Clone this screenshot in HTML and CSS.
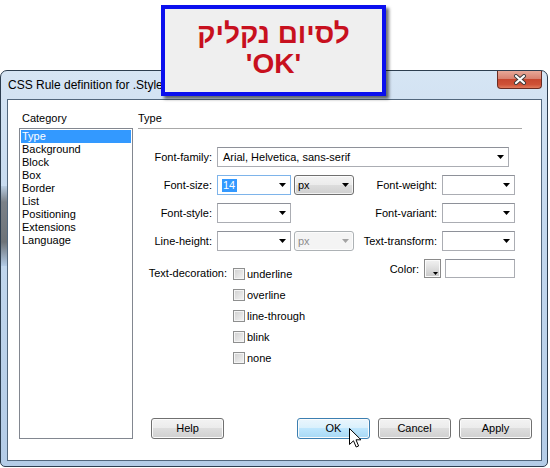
FILE: index.html
```html
<!DOCTYPE html>
<html>
	<head>
		<meta charset="utf-8">
		<title>CSS Rule definition</title>
		<link rel="stylesheet" href="styles.css">
	</head>
	<body>
		<div class="callout">
			<div class="callout-text">
				<div dir="rtl">לסיום נקליק</div>
				<div dir="ltr">'OK'</div>
			</div>
		</div>

		<div class="window">
			<div class="titlebar">
				<span class="title">CSS Rule definition for .Style</span>
				<div class="close">
					<svg width="14" height="11" viewBox="0 0 14 11">
						<path d="M3 2 L11 9 M11 2 L3 9" stroke="#3b3b3b" stroke-width="4" stroke-linecap="round"/>
						<path d="M3 2 L11 9 M11 2 L3 9" stroke="#ffffff" stroke-width="2.2" stroke-linecap="round"/>
					</svg>
				</div>
			</div>

			<div class="client">
				<div class="categories">
					<div class="heading">Category</div>
					<ul class="listbox">
						<li class="selected">Type</li>
						<li>Background</li>
						<li>Block</li>
						<li>Box</li>
						<li>Border</li>
						<li>List</li>
						<li>Positioning</li>
						<li>Extensions</li>
						<li>Language</li>
					</ul>
				</div>

				<div class="panel">
					<div class="panel-title">Type</div>

					<div class="form">
						<!-- row 1 -->
						<span class="lbl">Font-family:</span>
						<div class="combo wide"><span>Arial, Helvetica, sans-serif</span><i class="arrow"></i></div>

						<!-- row 2 -->
						<span class="lbl">Font-size:</span>
						<div class="combo focused"><span class="sel">14</span><i class="arrow"></i></div>
						<div class="dropdown"><span>px</span><i class="arrow"></i></div>
						<span class="lbl lbl2">Font-weight:</span>
						<div class="combo"><span></span><i class="arrow"></i></div>

						<!-- row 3 -->
						<span class="lbl">Font-style:</span>
						<div class="combo"><span></span><i class="arrow"></i></div>
						<span class="lbl lbl2">Font-variant:</span>
						<div class="combo"><span></span><i class="arrow"></i></div>

						<!-- row 4 -->
						<span class="lbl">Line-height:</span>
						<div class="combo"><span></span><i class="arrow"></i></div>
						<div class="dropdown disabled"><span>px</span><i class="arrow"></i></div>
						<span class="lbl lbl2">Text-transform:</span>
						<div class="combo"><span></span><i class="arrow"></i></div>

						<!-- row 5 -->
						<div class="decoration">
							<span class="deco-label">Text-decoration:</span>
							<div class="checks">
								<div class="check"><i class="box"></i>underline</div>
								<div class="check"><i class="box"></i>overline</div>
								<div class="check"><i class="box"></i>line-through</div>
								<div class="check"><i class="box"></i>blink</div>
								<div class="check"><i class="box"></i>none</div>
							</div>
						</div>
						<div class="color-field">
							<span>Color:</span>
							<i class="swatch"></i>
							<div class="textbox"></div>
						</div>
					</div>

					<div class="buttons">
						<div class="btn help">Help</div>
						<div class="btn default">OK</div>
						<div class="btn">Cancel</div>
						<div class="btn">Apply</div>
					</div>
				</div>
			</div>
		</div>

		<svg class="cursor" width="14" height="21" viewBox="0 0 14 21">
			<path d="M0.5 0.5 V16.5 L4.5 12.8 L7.2 19 L9.6 18 L7 11.8 H12 Z" fill="#ffffff" stroke="#000000" stroke-width="1" stroke-linejoin="miter"/>
		</svg>
	</body>
</html>
```

FILE: styles.css
```css
* {
	box-sizing: border-box;
}

body {
	margin: 0;
	background: #ffffff;
	font-family: "Liberation Sans", Arial, sans-serif;
	font-size: 11px;
	color: #000000;
}

/* callout over the dialog */

.callout {
	position: absolute;
	left: 161px;
	top: 5px;
	width: 225px;
	height: 91px;
	border: 4px solid #0b10ee;
	background: #efefef;
	box-shadow: 3px 3px 3px rgba(0, 0, 0, 0.55);
	display: flex;
	align-items: center;
	justify-content: center;
	padding-bottom: 3px;
	z-index: 2;
}

.callout-text {
	color: #c8101e;
	font-family: "Liberation Sans", Arial, sans-serif;
	font-weight: bold;
	font-size: 28px;
	line-height: 30px;
	text-align: center;
}

/* window frame */

.window {
	width: 548px;
	height: 397px;
	margin-top: 70px;
	border: 1px solid #2d3e50;
	border-radius: 7px 7px 5px 5px;
	background:
		linear-gradient(#b9cde2, #7b8188 20%, #6e7378 70%, #b3cbe6) no-repeat 0 115px / 7px 80px,
		linear-gradient(#d6e5f4, #c3d8ee 40%, #b4cce7);
	padding-bottom: 5px;
	display: flex;
	flex-direction: column;
}

.titlebar {
	height: 28px;
	display: flex;
	align-items: center;
	padding: 0 5px 0 7px;
	font-size: 12px;
}

.title {
	flex: 1;
}

.close {
	align-self: flex-start;
	width: 45px;
	height: 18px;
	border: 1px solid #6a2c22;
	border-top: none;
	border-radius: 0 0 4px 4px;
	background: linear-gradient(#e8a898, #d98270 45%, #c7472f 50%, #cf5237 80%, #e07a5c);
	display: flex;
	align-items: center;
	justify-content: center;
}

.client {
	height: 362px;
	margin: 0 5px 0 6px;
	border: 1px solid #52677d;
	background: #ffffff;
	display: flex;
	gap: 5px;
	padding: 12px 9px 21px 11px;
}

/* category list */

.categories {
	width: 114px;
	display: flex;
	flex-direction: column;
}

.heading {
	line-height: 13px;
	padding-left: 3px;
	margin-bottom: 3px;
}

.listbox {
	flex: 1;
	margin: 0;
	padding: 1px;
	list-style: none;
	border: 1px solid #828790;
}

.listbox li {
	line-height: 13px;
	padding-left: 1px;
}

.listbox .selected {
	background: #3399ff;
	color: #ffffff;
}

/* type panel */

.panel {
	width: 394px;
	display: flex;
	flex-direction: column;
}

.panel-title {
	line-height: 13px;
	padding-bottom: 3px;
	margin-right: 10px;
	border-bottom: 1px solid #a8a8a8;
}

.form {
	display: grid;
	grid-template-columns: 79px 74px 63px 88px 73px;
	grid-template-rows: repeat(4, 20px) auto;
	row-gap: 8px;
	margin-top: 18px;
	align-items: center;
}

.lbl {
	text-align: right;
	padding-right: 5px;
	white-space: nowrap;
}

.lbl2 {
	grid-column: 4;
}

.combo {
	height: 20px;
	border: 1px solid #abadb3;
	border-top-color: #8e9199;
	background: #ffffff;
	display: flex;
	align-items: center;
	justify-content: space-between;
	padding: 0 4px 0 5px;
}

.combo.wide {
	grid-column: 2 / 6;
	width: 292px;
}

.combo.focused {
	border-color: #7eb4ea;
	padding-left: 4px;
}

.sel {
	background: #3399ff;
	color: #ffffff;
	line-height: 13px;
	padding: 0 2px 0 1px;
}

.arrow {
	width: 7px;
	height: 4px;
	background: #000000;
	clip-path: polygon(0 0, 100% 0, 50% 100%);
}

.dropdown {
	justify-self: end;
	width: 60px;
	height: 20px;
	border: 1px solid #707070;
	border-radius: 3px;
	background: linear-gradient(#f3f3f3, #ebebeb 50%, #dddddd 50%, #cfcfcf);
	box-shadow: inset 0 0 0 1px rgba(255, 255, 255, 0.7);
	display: flex;
	align-items: center;
	justify-content: space-between;
	padding: 0 4px 0 3px;
}

.dropdown.disabled {
	border-color: #adb2b5;
	background: #f4f4f4;
	color: #8d8d8d;
}

.dropdown.disabled .arrow {
	background: #a3a3a3;
}

/* text decoration + color */

.decoration {
	grid-column: 1 / 4;
	align-self: start;
	display: grid;
	grid-template-columns: 89px auto;
	column-gap: 6px;
	padding-top: 4px;
}

.deco-label {
	text-align: right;
	line-height: 21px;
	white-space: nowrap;
}

.check {
	height: 21px;
	display: flex;
	align-items: center;
	gap: 2px;
}

.box {
	width: 12px;
	height: 12px;
	border: 1px solid #8e8f8f;
	background: linear-gradient(135deg, #cfcfcf, #f4f4f4);
	box-shadow: inset 0 0 0 1px #f4f4f4;
}

.color-field {
	grid-column: 4 / 6;
	justify-self: end;
	align-self: start;
	height: 19px;
	display: flex;
	align-items: center;
}

.swatch {
	position: relative;
	width: 17px;
	height: 19px;
	margin-left: 5px;
	border: 1px solid #8a8a8a;
	background: linear-gradient(#f2f2f2, #c9c9c9);
	box-shadow: inset 0 0 0 1px #fafafa;
}

.swatch::after {
	content: "";
	position: absolute;
	right: 2px;
	bottom: 2px;
	width: 5px;
	height: 3px;
	background: #000000;
	clip-path: polygon(0 0, 100% 0, 50% 100%);
}

.textbox {
	width: 70px;
	height: 19px;
	margin-left: 4px;
	border: 1px solid #abadb3;
	border-top-color: #8e9199;
	background: #ffffff;
}

/* buttons */

.buttons {
	margin-top: auto;
	display: flex;
	gap: 8px;
	padding-left: 13px;
}

.btn {
	width: 73px;
	height: 21px;
	border: 1px solid #707070;
	border-radius: 3px;
	background: linear-gradient(#f3f3f3, #ebebeb 49%, #dddddd 50%, #d0d0d0);
	box-shadow: inset 0 0 0 1px #fbfbfb;
	text-align: center;
	line-height: 19px;
}

.btn.help {
	margin-right: auto;
}

.btn.default {
	border-color: #3c7fb1;
	background: linear-gradient(#eaf6fd, #d9f0fc 49%, #bee6fd 50%, #a7d9f5);
}

.cursor {
	position: absolute;
	left: 349px;
	top: 428px;
}
```
